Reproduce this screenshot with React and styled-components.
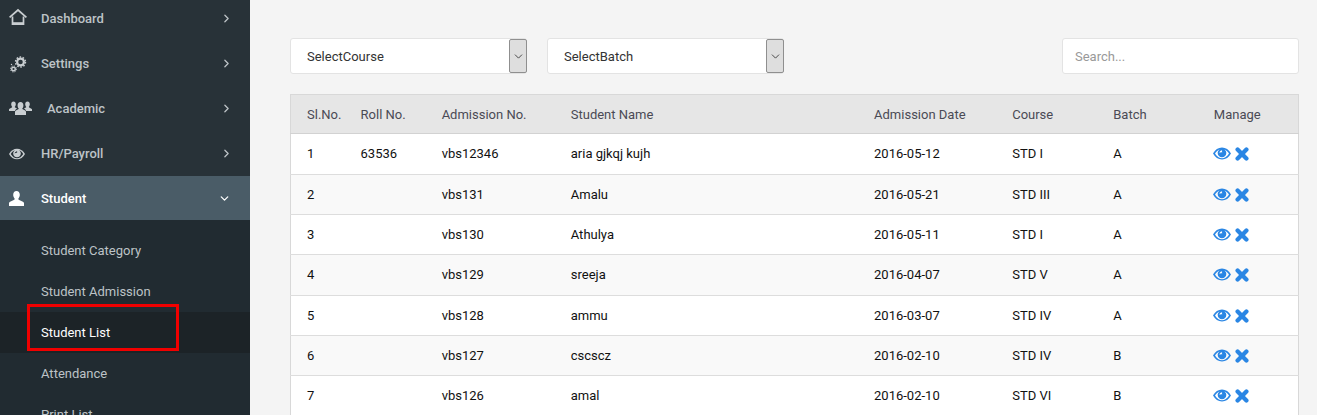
import React from "react";
import styled, { createGlobalStyle } from "styled-components";
import { ChevronRight, ChevronDown } from "lucide-react";

const GlobalStyle = createGlobalStyle`
  html, body {
    margin: 0;
    height: 415px;
    overflow: hidden;
    background: #f4f4f4;
    font-family: Roboto, "Liberation Sans", sans-serif;
  }
`;

const Page = styled.div`
  display: flex;
  width: 1317px;
  height: 415px;
  overflow: hidden;
`;

const Sidebar = styled.aside`
  width: 250px;
  flex: none;
  background: #283238;
  font-size: 13px;
`;

const MenuRow = styled.div`
  display: flex;
  align-items: center;
  height: ${(p) => (p.$active ? 44 : 45)}px;
  margin-top: ${(p) => (p.$first ? -4 : 0)}px;
  padding-left: 9px;
  color: ${(p) => (p.$active ? "#fff" : "#bdc3c7")};
  background: ${(p) => (p.$active ? "#4a5c67" : "transparent")};
  font-weight: 500;
`;

const MenuIcon = styled.span`
  display: flex;
  align-items: center;
  width: 32px;
  flex: none;
  color: ${(p) => (p.$active ? "#fff" : "#c9ced1")};
`;

const MenuLabel = styled.span`
  flex: 1;
  padding-left: ${(p) => p.$indent || 0}px;
`;

const Chevron = styled.span`
  display: flex;
  width: ${(p) => (p.$open ? 32 : 30)}px;
  flex: none;
`;

const SubMenu = styled.div`
  background: #212b31;
  padding-top: 10px;
`;

const SubRow = styled.div`
  display: flex;
  align-items: center;
  height: 41px;
  padding-left: 41px;
  color: ${(p) => (p.$active ? "#fff" : "#bdc3c7")};
  background: ${(p) => (p.$active ? "#1c2327" : "transparent")};
`;

const Highlight = styled.div`
  position: absolute;
  left: 27px;
  top: 304px;
  width: 152px;
  height: 47px;
  box-sizing: border-box;
  border: 3px solid #f00000;
`;

const Main = styled.main`
  flex: 1;
  padding: 38px 18px 0 40px;
  min-width: 0;
`;

const Filters = styled.div`
  display: flex;
  align-items: center;
  gap: 20px;
  height: 36px;
  margin-bottom: 20px;
`;

const SelectBox = styled.div`
  display: flex;
  align-items: center;
  justify-content: space-between;
  box-sizing: border-box;
  width: 237px;
  height: 36px;
  padding-left: 16px;
  background: #fff;
  border: 1px solid #e3e3e3;
  border-radius: 3px;
  color: #333;
  font-size: 13px;
`;

const SelectArrow = styled.span`
  display: flex;
  align-items: center;
  justify-content: center;
  box-sizing: border-box;
  width: 18px;
  height: 34px;
  margin-right: -1px;
  background: #dedede;
  border: 1px solid #8f8f8f;
  border-radius: 2px;
  color: #333;
`;

const SearchBox = styled.div`
  box-sizing: border-box;
  width: 237px;
  height: 36px;
  margin-left: auto;
  padding: 0 12px;
  background: #fff;
  border: 1px solid #e3e3e3;
  border-radius: 3px;
  color: #999;
  font-size: 13px;
  line-height: 36px;
`;

const Table = styled.table`
  width: 1009px;
  table-layout: fixed;
  border-collapse: collapse;
  border: 1px solid #d8d8d8;
  background: #fff;
  font-size: 13px;
  color: #111;
`;

const HeadCell = styled.th`
  height: 38px;
  padding: 0 0 0 16px;
  background: #e6e6e6;
  border-bottom: 1px solid #d2d2d2;
  color: #4a4a55;
  font-weight: 400;
  text-align: left;
`;

const Row = styled.tr`
  background: ${(p) => (p.$odd ? "#fff" : "#f9f9f9")};
`;

const Cell = styled.td`
  height: 39px;
  padding: 0 0 ${(p) => (p.$tall ? 1 : 0)}px 16px;
  border-bottom: 1px solid #dddddd;
`;

const Actions = styled.span`
  display: flex;
  align-items: center;
  gap: 4px;
  margin-left: -1px;
  color: #2a86e4;
`;

const HomeSvg = styled.svg`
  margin-top: -3px;
`;

const GroupSvg = styled.svg`
  margin-top: -2px;
`;

const HomeIcon = () => (
  <HomeSvg width="18" height="18" viewBox="0 0 18 18" fill="none" stroke="currentColor" strokeWidth="1.7">
    <path d="M.6 9.4 9 2l8.4 7.4" />
    <path d="M3.5 8.5v7.6h11V8.5" />
    <path d="M3.5 15.4h11" strokeWidth="2.4" />
  </HomeSvg>
);

const CogsIcon = () => (
  <svg width="18" height="18" viewBox="0 0 18 18" fill="none" stroke="currentColor">
    <circle cx="11.5" cy="7" r="3.4" strokeWidth="2.2" />
    <circle cx="11.5" cy="7" r="5" strokeWidth="1.4" strokeDasharray="1.6 1.54" />
    <circle cx="4.5" cy="14" r="1.8" strokeWidth="1.4" />
    <circle cx="4.5" cy="14" r="3" strokeWidth="1" strokeDasharray="1.2 1.15" />
    <circle cx="2.5" cy="9.5" r=".7" fill="currentColor" stroke="none" />
  </svg>
);

const GroupIcon = () => (
  <GroupSvg width="23" height="16" viewBox="0 0 23 16" fill="currentColor">
    <path d="M4.5 1.5C6 1.5 6.8 2.8 6.8 4.3 6.8 5.5 6.3 6.4 5.7 7 6 7.7 7.1 8 8 8.4 6.8 9 6.3 9.7 6 11H0V9.3C.5 8.3 2.3 8 3.3 7 2.7 6.4 2.2 5.5 2.2 4.3 2.2 2.8 3 1.5 4.5 1.5Z" />
    <path d="M18.5 1.5C20 1.5 20.8 2.8 20.8 4.3 20.8 5.5 20.3 6.4 19.7 7 20.7 8 22.5 8.3 23 9.3V11H17C16.7 9.7 16.2 9 15 8.4 15.9 8 17 7.7 17.3 7 16.7 6.4 16.2 5.5 16.2 4.3 16.2 2.8 17 1.5 18.5 1.5Z" />
    <path d="M11.5 2C13.4 2 14.4 3.6 14.4 5.4 14.4 6.9 13.8 8 13.1 8.7 14.2 9.9 16.5 10.2 17 11.5V15H6V11.5C6.5 10.2 8.8 9.9 9.9 8.7 9.2 8 8.6 6.9 8.6 5.4 8.6 3.6 9.6 2 11.5 2Z" />
  </GroupSvg>
);

const EyeIcon = ({ size = 18, ring = "#fff" }) => (
  <svg width={size} height={Math.round(size * 0.72)} viewBox="0 0 18 13">
    <path fill="currentColor" d="M0 6.5C2 2.7 5.3.5 9 .5s7 2.2 9 6c-2 3.8-5.3 6-9 6s-7-2.2-9-6Z" />
    <path fill={ring} d="M2 6.5C3.4 4.3 5 3 6.6 2.4 5.4 3.3 4.7 4.5 4.7 5.9 4.7 8.3 6.6 10.2 9 10.2 11.4 10.2 13.3 8.3 13.3 5.9 13.3 4.5 12.6 3.3 11.4 2.4 13 3 14.6 4.3 16 6.5 14.2 9.7 11.6 11.3 9 11.3 6.4 11.3 3.8 9.7 2 6.5Z" />
    <path fill={ring} d="M6.4 5.8C6.6 4.3 7.7 3.4 9.2 3.3 8.8 4 8.9 4.8 9.4 5.3 8.4 5 7.3 5.1 6.4 5.8Z" />
  </svg>
);

const UserIcon = () => (
  <svg width="15" height="15" viewBox="0 0 15 15" fill="currentColor">
    <path d="M7.5 0C9.5 0 10.8 1.7 10.8 3.8 10.8 5.4 10.2 6.6 9.4 7.4V8.6C10.8 9.7 14 10.2 15 11.8V15H0V11.8C1 10.2 4.2 9.7 5.6 8.6V7.4C4.8 6.6 4.2 5.4 4.2 3.8 4.2 1.7 5.5 0 7.5 0Z" />
  </svg>
);

const RemoveIcon = () => (
  <svg width="14" height="14" viewBox="0 0 14 14" fill="none" stroke="currentColor" strokeWidth="4.3" strokeLinecap="round">
    <path d="M2.6 2.6 11.4 11.4M11.4 2.6 2.6 11.4" />
  </svg>
);

const menu = [
  { label: "Dashboard", icon: <HomeIcon /> },
  { label: "Settings", icon: <CogsIcon /> },
  { label: "Academic", icon: <GroupIcon />, indent: 6 },
  { label: "HR/Payroll", icon: <EyeIcon size={16} ring="#283238" /> },
];

const subMenu = ["Student Category", "Student Admission", "Student List", "Attendance", "Print List"];

const columns = [
  ["Sl.No.", 54],
  ["Roll No.", 81],
  ["Admission No.", 129],
  ["Student Name", 303],
  ["Admission Date", 138],
  ["Course", 101],
  ["Batch", 100.5],
  ["Manage", 100.5],
];

const students = [
  [1, "63536", "vbs12346", "aria gjkqj kujh", "2016-05-12", "STD I", "A"],
  [2, "", "vbs131", "Amalu", "2016-05-21", "STD III", "A"],
  [3, "", "vbs130", "Athulya", "2016-05-11", "STD I", "A"],
  [4, "", "vbs129", "sreeja", "2016-04-07", "STD V", "A"],
  [5, "", "vbs128", "ammu", "2016-03-07", "STD IV", "A"],
  [6, "", "vbs127", "cscscz", "2016-02-10", "STD IV", "B"],
  [7, "", "vbs126", "amal", "2016-02-10", "STD VI", "B"],
];

export default function App() {
  return (
    <Page>
      <GlobalStyle />
      <Sidebar>
        {menu.map((item, i) => (
          <MenuRow key={item.label} $first={i === 0}>
            <MenuIcon>{item.icon}</MenuIcon>
            <MenuLabel $indent={item.indent}>{item.label}</MenuLabel>
            <Chevron>
              <ChevronRight size={13} strokeWidth={2.4} />
            </Chevron>
          </MenuRow>
        ))}
        <MenuRow $active>
          <MenuIcon $active>
            <UserIcon />
          </MenuIcon>
          <MenuLabel>Student</MenuLabel>
          <Chevron $open>
            <ChevronDown size={13} strokeWidth={2.4} />
          </Chevron>
        </MenuRow>
        <SubMenu>
          {subMenu.map((label) => (
            <SubRow key={label} $active={label === "Student List"}>
              {label}
            </SubRow>
          ))}
        </SubMenu>
      </Sidebar>
      <Highlight />
      <Main>
        <Filters>
          <SelectBox>
            SelectCourse
            <SelectArrow>
              <ChevronDown size={13} strokeWidth={1.6} />
            </SelectArrow>
          </SelectBox>
          <SelectBox>
            SelectBatch
            <SelectArrow>
              <ChevronDown size={13} strokeWidth={1.6} />
            </SelectArrow>
          </SelectBox>
          <SearchBox>Search...</SearchBox>
        </Filters>
        <Table>
          <colgroup>
            {columns.map(([name, width]) => (
              <col key={name} style={{ width }} />
            ))}
          </colgroup>
          <thead>
            <tr>
              {columns.map(([name]) => (
                <HeadCell key={name}>{name}</HeadCell>
              ))}
            </tr>
          </thead>
          <tbody>
            {students.map((student) => {
              const tall = student[0] === 1 || student[0] === 4;
              return (
                <Row key={student[0]} $odd={student[0] % 2 === 1}>
                  {student.map((value, i) => (
                    <Cell key={i} $tall={tall}>
                      {value}
                    </Cell>
                  ))}
                  <Cell $tall={tall}>
                    <Actions>
                      <EyeIcon ring={student[0] % 2 === 1 ? "#fff" : "#f9f9f9"} />
                      <RemoveIcon />
                    </Actions>
                  </Cell>
                </Row>
              );
            })}
          </tbody>
        </Table>
      </Main>
    </Page>
  );
}
